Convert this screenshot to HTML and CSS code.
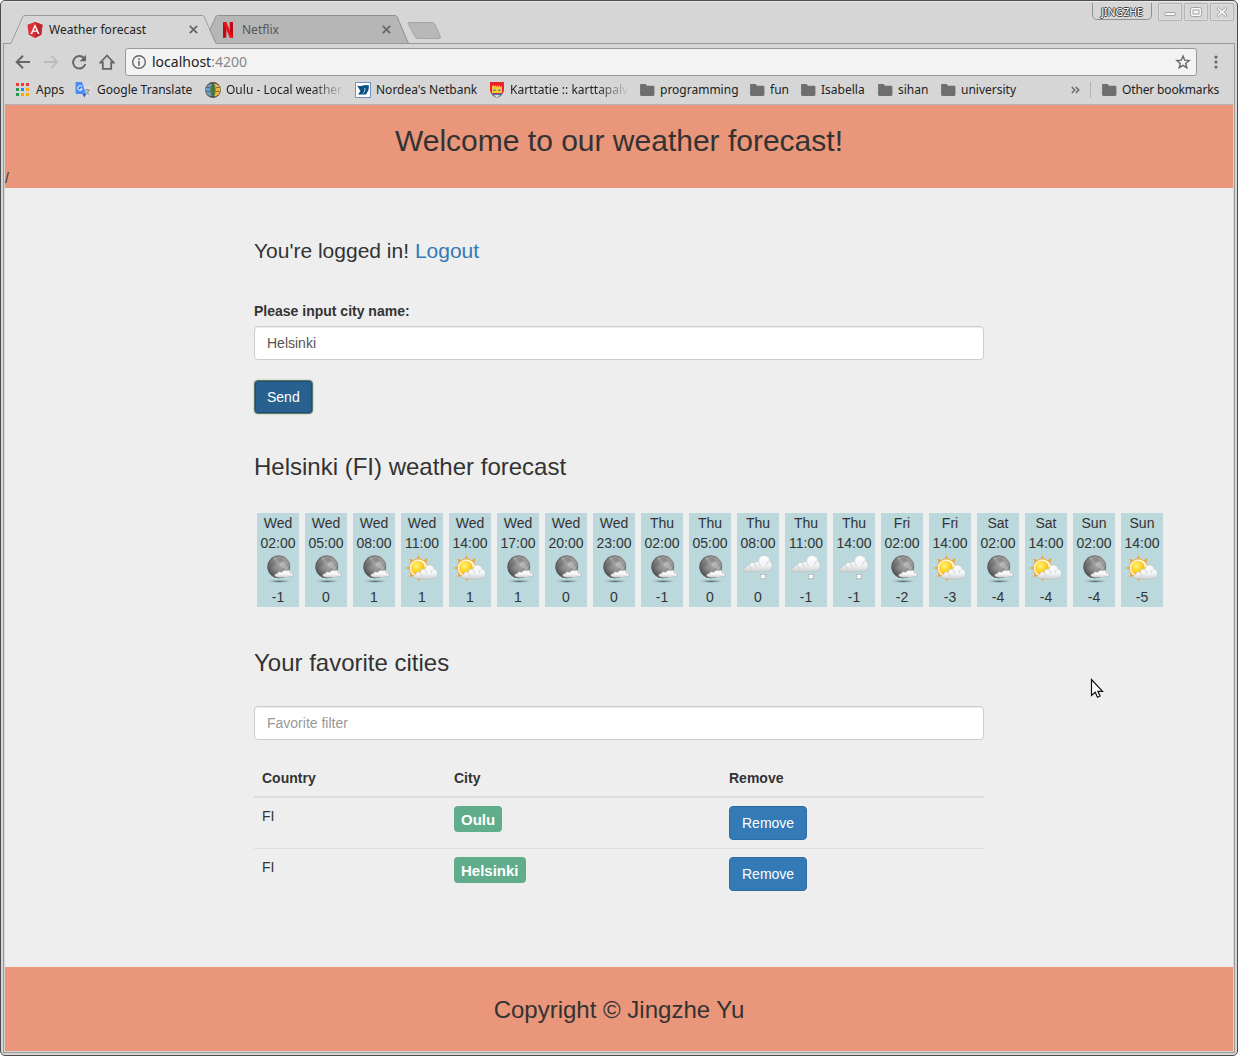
FILE: index.html
```html
<!DOCTYPE html>
<html lang="en">
<head>
<meta charset="utf-8">
<title>Weather forecast</title>
<link rel="stylesheet" href="styles.css">
</head>
<body>
<svg class="defs" width="0" height="0" aria-hidden="true">
  <defs>
    <radialGradient id="moonFill" cx=".65" cy=".35" r=".75"><stop offset="0" stop-color="#adadad"/><stop offset=".5" stop-color="#8c8c8c"/><stop offset="1" stop-color="#484848"/></radialGradient>
    <radialGradient id="sunFill" cx=".4" cy=".35" r=".7"><stop offset="0" stop-color="#fff27a"/><stop offset=".6" stop-color="#fcd21e"/><stop offset="1" stop-color="#f0a31a"/></radialGradient>
    <linearGradient id="cloudFill" x1="0" y1="0" x2="0" y2="1"><stop offset="0" stop-color="#fff"/><stop offset=".6" stop-color="#f2f3f3"/><stop offset="1" stop-color="#cccfd0"/></linearGradient>
    <radialGradient id="shadowFill"><stop offset="0" stop-color="#465253" stop-opacity=".85"/><stop offset="1" stop-color="#738384" stop-opacity="0"/></radialGradient>
    <symbol id="moon" viewBox="0 0 34 34">
      <ellipse cx="18" cy="28.300" rx="12" ry="1.700" fill="url(#shadowFill)"/>
      <circle cx="17.700" cy="13.800" r="11.200" fill="url(#moonFill)" stroke="#555" stroke-width=".5"/>
      <path d="M9 11l3-3 3 1-1 4-4 1zM17 6l4-1 2 3-4 2z" fill="#555" opacity=".25"/>
      <path d="M20 9l4 1 1 4-4 1-3-3zM12 5l3-1 1 2-3 1zM24 13l3 1v3h-3z" fill="#ccc" opacity=".4"/>
      <path d="M14.500 23.500C13 22.500 14 20.500 16.500 20.800C16.500 18.800 19 18.200 20.500 19.600C22 17 25 17.200 26 17.800C27.500 16.500 29 17.600 29.300 19.500C30.500 19.600 31.500 21.500 33.200 23.200C31.800 24.400 30 23.200 28.500 23.200C27 25 24.500 24.600 22.500 24C20 24.800 17 24.600 14.500 23.500Z" fill="url(#cloudFill)" stroke="#a8a8a8" stroke-width=".35"/>
    </symbol>
    <symbol id="sun" viewBox="0 0 34 34">
      <path d="M13.500 2l1.900 5h-3.800zM22.800 5l-1.500 4.800-2.800-2.600zM4 5.500l5 1.700-2.700 2.700zM.6 15l5-1.900v3.800zM4 24.500l2.300-4.800 2.700 2.700zM13.500 28.500l-1.900-5h3.800z" fill="#f0a42c"/>
      <circle cx="13.500" cy="15" r="9.500" fill="#eba938"/>
      <circle cx="13.500" cy="15" r="8.700" fill="#faf6df"/>
      <circle cx="12.900" cy="14.800" r="6.900" fill="url(#sunFill)"/>
      <path d="M10.500 25.300C7.800 24.500 8 21.300 11 21.200C11 19 13.500 18.200 15.300 19.400C15.300 16.500 18 15.200 20.200 16.400C20.500 12.500 24.300 10.800 27.200 12.900C28.500 13.900 28.700 14.600 29 15.700C31.300 16.300 32.800 18.500 32.700 21C32.600 24 30.300 26 27 26C21.500 26.200 15.500 26.200 10.500 25.300Z" fill="url(#cloudFill)" stroke="#b2b6b7" stroke-width=".5"/>
      <path d="M20 17q2 1.500 1.500 4M28.500 16.500q-2.500.2-2.800 3.500M15.300 20q1.500.8 1.700 2.500" fill="none" stroke="#c3c7c8" stroke-width=".7"/>
    </symbol>
    <symbol id="snow" viewBox="0 0 34 34">
      <path d="M5 18.700C1 18.800 1.500 14.800 5 14.700C5 12.500 7 12 8.300 12.800C8.300 9.800 11.200 8.500 13.500 10.300C14.500 8.600 16.300 8.400 17.300 9C17.200 3.500 22.500 1 26 3.300C28 4.400 28.800 6.200 28.800 8.200C31 9 32 14 29.800 16.200C28 18.300 25.500 18.800 23.500 18.200C18 19 11 19 5 18.700Z" fill="url(#cloudFill)" stroke="#bcc1c2" stroke-width=".5"/>
      <path d="M13.500 10.500q2 1.200 1.500 4M28.500 8.500q-3 .2-3.700 4M8.300 13q1.700.8 1.700 2.800M17.300 9q2 1.400 1.800 4" fill="none" stroke="#c3c7c8" stroke-width=".8"/>
      <path d="M22 20.400v6.400M19 22l6 3.200M19 25.200l6-3.200" stroke="#8f999a" stroke-width="2"/>
      <path d="M22 20.800v5.600M19.500 22.300l5 2.600M19.500 24.900l5-2.600" stroke="#fff" stroke-width="1.300"/>
    </symbol>
    <symbol id="folder" viewBox="0 0 16 16"><path d="M2 2H6.500L8 3.700h6.200c.7 0 1.200.5 1.200 1.200v7.800c0 .7-.5 1.200-1.200 1.200H2.300c-.7 0-1.200-.5-1.200-1.200V3.100C1.100 2.500 1.500 2 2 2z" fill="#6e6e6e"/></symbol>
  </defs>
</svg>
<div class="window">
  <div class="tabstrip">
    <svg class="tab-shapes" width="1238" height="45" viewBox="0 0 1238 45">
      <path d="M209.500 30.500L216 16.500q.5-1 1.500-1H395q1.500 0 2 1l11.500 27H216z" fill="#b6b6b6" stroke="#909090"/>
      <path d="M408.500 22.500H432q2 0 3 2l5 11.500q1 2.500-1 2.500H418q-2 0-3-2l-6.500-12q-1-2 0-2z" fill="#b8b8b8" stroke="#a3a3a3"/>
      <path d="M3.500 43.500H11L23 16.500q.5-1 1.500-1H202q1.500 0 2 1l12 27H1234.500" fill="none" stroke="#999"/>
      <path d="M11.500 44L23.500 17q.5-1 1.500-1H202q1 0 1.500 1l12 27z" fill="#d6d6d6"/>
    </svg>
    <div class="tab tab-active">
      <svg width="16" height="16" viewBox="0 0 16 16"><path d="M8 0l7.500 2.700-1.200 10L8 16l-6.300-3.300-1.200-10z" fill="#dd3035"/><path d="M8 0l7.500 2.700-1.200 10L8 16z" fill="#bd2930"/><path d="M8 2L3.500 12h1.700l.9-2.300h3.800l.9 2.300h1.700zm0 3.200l1.300 3.200H6.700z" fill="#fff"/></svg>
      <span class="tab-title">Weather forecast</span>
      <svg class="close" width="9" height="9" viewBox="0 0 9 9"><path d="M.8.8l7.400 7.400M8.200.8L.8 8.200"/></svg>
    </div>
    <div class="tab tab-idle">
      <svg width="16" height="16" viewBox="0 0 16 16"><path d="M3 0h3.300v15.500L3 16zM9.700 0H13v16l-3.300-.5z" fill="#c40812"/><path d="M3 0h3.300L13 16l-3.300-.5z" fill="#ed111c"/></svg>
      <span class="tab-title">Netflix</span>
      <svg class="close" width="9" height="9" viewBox="0 0 9 9"><path d="M.8.8l7.400 7.400M8.200.8L.8 8.200"/></svg>
    </div>
    <div class="controls">
      <span class="profile">JINGZHE</span>
      <span class="control"><svg width="22" height="16" viewBox="0 0 22 16"><rect x="5.500" y="8.500" width="11" height="3" rx="1.500"/></svg></span>
      <span class="control"><svg width="22" height="16" viewBox="0 0 22 16"><rect x="5.500" y="3.500" width="11" height="9" rx="2"/><rect x="8" y="6" width="6" height="4"/></svg></span>
      <span class="control"><svg width="22" height="16" viewBox="0 0 22 16"><path d="M6 5l1.500-1.500L11 6.500l3.500-3L16 5l-3.200 3 3.200 3.300-1.500 1.400L11 9.700l-3.500 3L6 11.300 9.200 8z"/></svg></span>
    </div>
  </div>
  <div class="viewport">
    <div class="toolbar">
      <div class="nav">
        <svg width="16" height="16" viewBox="0 0 16 16"><path d="M15 8H2M8 1.700L1.700 8 8 14.300" fill="none" stroke="#666" stroke-width="2"/></svg>
        <svg width="16" height="16" viewBox="0 0 16 16"><path d="M1 8h13M8 1.700L14.300 8 8 14.300" fill="none" stroke="#bcbcbc" stroke-width="1.800"/></svg>
        <svg width="16" height="16" viewBox="0 0 16 16"><path d="M13 4.200A6.200 6.200 0 1 0 14.300 10" fill="none" stroke="#666" stroke-width="2"/><path d="M15 .8v6.400H8.700z" fill="#666"/></svg>
        <svg width="16" height="16" viewBox="0 0 16 16"><path d="M8 1.500L1.500 8.500h2.300v6.300h8.400V8.500h2.300z" fill="none" stroke="#666" stroke-width="1.800"/></svg>
      </div>
      <div class="omnibox">
        <svg width="16" height="16" viewBox="0 0 16 16"><circle cx="8" cy="8" r="6.300" fill="none" stroke="#666" stroke-width="1.400"/><path d="M7.200 4.300h1.600v1.600H7.200zM7.200 7h1.600v4.700H7.200z" fill="#666"/></svg>
        <span class="url">localhost<span class="port">:4200</span></span>
        <svg width="16" height="16" viewBox="0 0 16 16"><path d="M8 2l1.700 4.200 4.400.3-3.400 2.900 1.100 4.400L8 11.400l-3.800 2.400 1.100-4.400-3.400-2.900 4.400-.3z" fill="none" stroke="#666" stroke-width="1.400"/></svg>
      </div>
      <svg class="menu" width="4" height="16" viewBox="0 0 4 16"><g fill="#666"><circle cx="2" cy="3" r="1.600"/><circle cx="2" cy="8" r="1.600"/><circle cx="2" cy="13" r="1.600"/></g></svg>
    </div>
    <div class="bookmarks">
      <span class="bm"><svg width="16" height="16" viewBox="0 0 16 16"><path d="M1 1h3v3H1zM6 1h3v3H6zM11 1h3v3h-3z" fill="#ed3b31"/><path d="M1 6h3v3H1zM1 11h3v3H1z" fill="#289850"/><path d="M6 6h3v3H6z" fill="#2986f0"/><path d="M11 6h3v3h-3zM6 11h3v3H6zM11 11h3v3h-3z" fill="#f9ad05"/></svg>Apps</span>
      <span class="bm translate"><svg width="16" height="16" viewBox="0 0 16 16"><path d="M7 4h8q1 0 1 1v9q0 1-1 1h-5z" fill="#dedede"/><path d="M1 0h6l4 12H2q-1.500 0-1.500-1.500V1Q.5 0 1 0z" fill="#4b8cf5"/><path d="M7.500 12H11l-1.500 3.500z" fill="#2a55c4"/><path d="M10 8h5M12.500 7v1M14 8q-1 3-3.500 5M11 9.500l3.500 3.500" stroke="#888" fill="none"/><path d="M7 4.600A2.400 2.400 0 1 0 7.300 7H5" fill="none" stroke="#fff" stroke-width="1"/></svg>Google Translate</span>
      <span class="bm faded"><svg width="16" height="16" viewBox="0 0 16 16"><circle cx="8" cy="8" r="7.900" fill="#454545"/><path d="M7 1.500a6.500 6.500 0 0 0 0 13z" fill="#6d9fbc"/><path d="M9 1.500a6.500 6.500 0 0 1 0 13z" fill="#eeb43b"/><ellipse cx="8" cy="8" rx="2.700" ry="6.500" fill="#4f7f3f"/><path d="M8 1v14M1 5.500h4M1 9.500h4M11 5.500h4M11 9.500h4" stroke="#454545" stroke-width=".6"/></svg>Oulu - Local weather</span>
      <span class="bm"><svg width="16" height="16" viewBox="0 0 16 16"><path d="M.5.500h15v15H.5z" fill="#fff" stroke="#6e91bd"/><path d="M2 3.500q3 1 6 0T14 3.500l-.5 4.500-2.500 4.500H3l2.500-3.500z" fill="#075084"/><path d="M8 11.500q2.500-2 2-5.500" stroke="#fff" stroke-width=".7" fill="none"/></svg>Nordea's Netbank</span>
      <span class="bm faded"><svg width="16" height="16" viewBox="0 0 16 16"><path d="M1 0h14v8q-.5 5-7 8-6.500-3-7-8z" fill="#ed2224"/><path d="M3 4l2-1v2l2-2v2l2-2v2l2-2v2l2-1v7H3z" fill="#f7c83b"/><path d="M4.500 7.500h2V9h-2zM9.500 7.500h2V9h-2z" fill="#3975aa"/><path d="M2 11q6 2 12 0-2 3-6 5-4-2-6-5z" fill="#337eaf"/><path d="M5 13h6l-3 3z" fill="#ddd"/></svg>Karttatie :: karttapalv</span>
      <span class="bm"><svg width="16" height="16"><use href="#folder"/></svg>programming</span>
      <span class="bm"><svg width="16" height="16"><use href="#folder"/></svg>fun</span>
      <span class="bm"><svg width="16" height="16"><use href="#folder"/></svg>Isabella</span>
      <span class="bm"><svg width="16" height="16"><use href="#folder"/></svg>sihan</span>
      <span class="bm"><svg width="16" height="16"><use href="#folder"/></svg>university</span>
      <span class="bm"><svg width="9" height="8" viewBox="0 0 9 8"><path d="M.8 1l3 3-3 3M4.800 1l3 3-3 3" fill="none" stroke="#666" stroke-width="1.400"/></svg></span>
      <span class="bm other"><svg width="16" height="16"><use href="#folder"/></svg>Other bookmarks</span>
    </div>
    <div class="page">
      <header class="banner">
        <h1>Welcome to our weather forecast!</h1>
        <p>/</p>
      </header>
      <main>
        <p class="session">You're logged in! <a>Logout</a></p>
        <label for="city">Please input city name:</label>
        <input id="city" class="field" type="text" value="Helsinki">
        <button class="btn btn-send">Send</button>
        <h3>Helsinki (FI) weather forecast</h3>
        <div class="forecast">
          <div class="slot"><span>Wed</span><span>02:00</span><svg><use href="#moon"/></svg><span>-1</span></div>
          <div class="slot"><span>Wed</span><span>05:00</span><svg><use href="#moon"/></svg><span>0</span></div>
          <div class="slot"><span>Wed</span><span>08:00</span><svg><use href="#moon"/></svg><span>1</span></div>
          <div class="slot"><span>Wed</span><span>11:00</span><svg><use href="#sun"/></svg><span>1</span></div>
          <div class="slot"><span>Wed</span><span>14:00</span><svg><use href="#sun"/></svg><span>1</span></div>
          <div class="slot"><span>Wed</span><span>17:00</span><svg><use href="#moon"/></svg><span>1</span></div>
          <div class="slot"><span>Wed</span><span>20:00</span><svg><use href="#moon"/></svg><span>0</span></div>
          <div class="slot"><span>Wed</span><span>23:00</span><svg><use href="#moon"/></svg><span>0</span></div>
          <div class="slot"><span>Thu</span><span>02:00</span><svg><use href="#moon"/></svg><span>-1</span></div>
          <div class="slot"><span>Thu</span><span>05:00</span><svg><use href="#moon"/></svg><span>0</span></div>
          <div class="slot"><span>Thu</span><span>08:00</span><svg><use href="#snow"/></svg><span>0</span></div>
          <div class="slot"><span>Thu</span><span>11:00</span><svg><use href="#snow"/></svg><span>-1</span></div>
          <div class="slot"><span>Thu</span><span>14:00</span><svg><use href="#snow"/></svg><span>-1</span></div>
          <div class="slot"><span>Fri</span><span>02:00</span><svg><use href="#moon"/></svg><span>-2</span></div>
          <div class="slot"><span>Fri</span><span>14:00</span><svg><use href="#sun"/></svg><span>-3</span></div>
          <div class="slot"><span>Sat</span><span>02:00</span><svg><use href="#moon"/></svg><span>-4</span></div>
          <div class="slot"><span>Sat</span><span>14:00</span><svg><use href="#sun"/></svg><span>-4</span></div>
          <div class="slot"><span>Sun</span><span>02:00</span><svg><use href="#moon"/></svg><span>-4</span></div>
          <div class="slot"><span>Sun</span><span>14:00</span><svg><use href="#sun"/></svg><span>-5</span></div>
        </div>
        <h3>Your favorite cities</h3>
        <input class="field filter" type="text" placeholder="Favorite filter">
        <table>
          <thead><tr><th class="c1">Country</th><th class="c2">City</th><th>Remove</th></tr></thead>
          <tbody>
            <tr><td>FI</td><td><span class="badge">Oulu</span></td><td><button class="btn">Remove</button></td></tr>
            <tr><td>FI</td><td><span class="badge">Helsinki</span></td><td><button class="btn">Remove</button></td></tr>
          </tbody>
        </table>
      </main>
      <footer>Copyright © Jingzhe Yu</footer>
    </div>
  </div>
  <svg class="cursor" width="14" height="21" viewBox="0 0 14 21"><path d="M1.500 1.500v16l3.700-3.300 2.300 5 2.600-1.200-2.200-4.700h4.600z" fill="#fff" stroke="#111" stroke-width="1.200"/></svg>
</div>
</body>
</html>
```
FILE: styles.css
```css
* { box-sizing: border-box; }
body { margin: 0; background: #fff; color: #333; font: 14px/20px "Liberation Sans", Arial, sans-serif; overflow: hidden; }
h1, h3, p { margin: 0; font-weight: 400; }
svg { display: block; flex: none; }
.defs { position: absolute; }

.window { position: relative; width: 1238px; height: 1056px; padding: 0 2px 2px; border: 1px solid #4c4c4c; border-radius: 5px; background: #d6d6d6; box-shadow: inset 0 1px #e9e9e9; display: flex; flex-direction: column; }

.tabstrip { height: 42px; display: flex; font: 12px/16px "Noto Sans", sans-serif; }
.tab-shapes { position: absolute; left: -1px; top: -1px; }
.tab { position: relative; display: flex; align-items: center; padding-top: 15px; gap: 6px; color: #222; }
.tab-active { width: 192px; margin-left: 24px; padding-right: 21px; }
.tab-active .tab-title { letter-spacing: .05px; }
.tab-idle { width: 200px; padding-right: 29px; color: #555; margin-left: 1px; }
.tab-title { flex: 1; }
.close path { fill: none; stroke: #666; stroke-width: 1.700; }
.controls { position: relative; display: flex; gap: 2px; margin: 2px 0 0 auto; height: 18px; padding-right: 1px; }
.profile { width: 60px; height: 17px; margin-right: 4px; border: 1px solid #909090; border-top: 0; border-radius: 0 0 5px 5px; color: #fff; font-size: 10.500px; line-height: 18px; text-align: center; text-shadow: 1px 0 #444, -1px 0 #444, 0 1px #444, 0 -1px #444; }
.control { width: 24px; height: 18px; border: 1px solid #b2b2b2; border-radius: 2px; box-shadow: inset 0 0 0 1px #dedede; }
.control rect, .control path { fill: #f8f8f8; stroke: #a2a2a2; }

.viewport { flex: 1; border: 1px solid #999; border-top: 0; padding: 0 1px 1px; display: flex; flex-direction: column; }
.toolbar { height: 36px; display: flex; align-items: center; padding: 1px 14px 0 10px; }
.nav { display: flex; gap: 12px; width: 110px; }
.omnibox { width: 1072px; height: 28px; padding: 0 5px; border: 1px solid #999; border-radius: 3px; background: #f3f3f3; display: flex; align-items: center; gap: 5px; font: 14px/20px "Noto Sans", sans-serif; color: #222; }
.url { flex: 1; }
.port { color: #888; }
.menu { margin-left: 17px; }
.bookmarks { height: 26px; padding: 0 0 4px 10px; border-bottom: 1px solid #b3b3b3; display: grid; grid-template-columns: 60px 130px 150px 134px 150px 110px 51px 77px 63px 131px 19px 140px; align-items: center; font: 12px/16px "Noto Sans", sans-serif; color: #222; }
.bm { display: flex; align-items: center; gap: 5px; white-space: nowrap; }
.translate { gap: 6px; }
.faded { width: max-content; -webkit-mask-image: linear-gradient(to right, #000 108px, transparent 140px); mask-image: linear-gradient(to right, #000 108px, transparent 140px); }
.other { border-left: 1px solid #b4b4b4; padding-left: 10px; letter-spacing: -.15px; }

.page { flex: 1; background: #eee; display: flex; flex-direction: column; }
.banner { height: 83px; background: #e9967a; }
.banner h1 { padding-top: 19px; font-size: 30px; line-height: 33px; text-align: center; }
.banner p { padding-top: 11px; }
main { flex: 1; width: 730px; margin-left: 249px; padding-top: 51px; display: flex; flex-direction: column; align-items: flex-start; }
.session { font-size: 21px; line-height: 24px; margin-bottom: 38px; }
.session a { color: #337ab7; }
label { font-weight: 700; margin-bottom: 5px; }
.field { width: 100%; height: 34px; padding: 6px 12px; border: 1px solid #ccc; border-radius: 4px; background: #fff; color: #555; font: inherit; box-shadow: inset 0 1px 1px rgba(0,0,0,.075); }
.field::placeholder { color: #999; opacity: 1; }
.btn { display: block; height: 34px; padding: 6px 12px; border: 1px solid #2e6da4; border-radius: 4px; background: #337ab7; color: #fff; font: inherit; }
.btn-send { margin: 20px 0 40px; background: #286090; border-color: #55766a; box-shadow: 0 0 1px 1px rgba(190,195,150,.4), inset 0 0 0 1px #204d74; }
h3 { font-size: 24px; line-height: 26px; }
.forecast { display: flex; gap: 6px; margin: 33px 0 43px 3px; }
.slot { width: 42px; height: 94px; flex: none; background: #bbd8dc; display: flex; flex-direction: column; align-items: center; }
.slot svg { width: 34px; height: 34px; }
.filter { margin: 30px 0 20px; }
table { width: 100%; border-collapse: separate; border-spacing: 0; table-layout: fixed; }
th, td { padding: 8px; text-align: left; vertical-align: top; }
th { border-bottom: 2px solid #ddd; }
tbody tr + tr td { border-top: 1px solid #ddd; }
.c1 { width: 192px; }
.c2 { width: 275px; }
.badge { display: block; width: max-content; height: 26px; padding: 0 7px; border-radius: 4px; background: #5fad8b; color: #fff; font-size: 15px; line-height: 27px; font-weight: 700; }
footer { height: 84px; background: #e9967a; font-size: 24px; line-height: 86px; text-align: center; }
.cursor { position: absolute; left: 1089px; top: 677px; }
```
